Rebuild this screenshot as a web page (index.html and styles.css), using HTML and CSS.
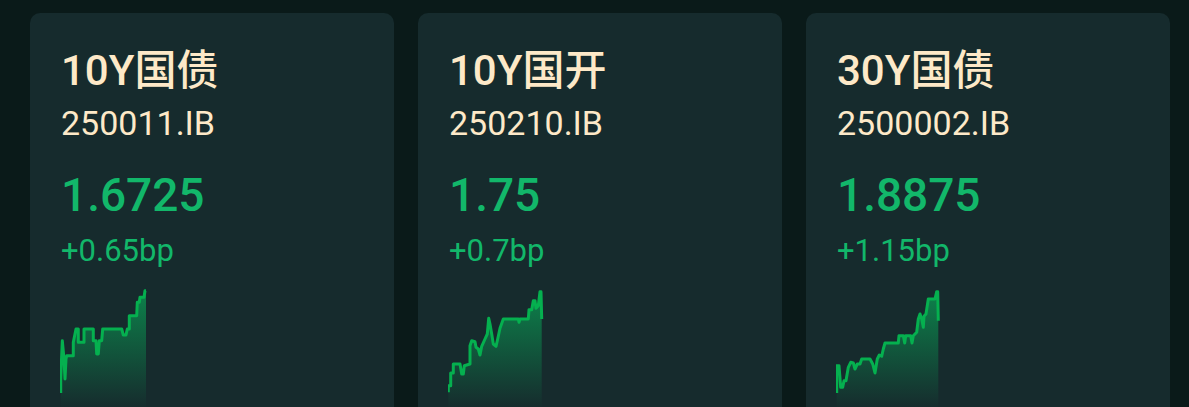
FILE: index.html
```html
<!DOCTYPE html>
<html>
<head>
    <title>Bond Yields</title>
    <link rel="stylesheet" href="styles.css">
</head>
<body>
    <svg class="defs" width="0" height="0">
        <defs>
            <linearGradient id="area" x1="0" y1="0" x2="0" y2="1">
                <stop offset="0" stop-color="#0b9150" stop-opacity="0.85"/>
                <stop offset="1" stop-color="#0b9150" stop-opacity="0"/>
            </linearGradient>
        </defs>
    </svg>
    <div class="board">
        <div class="card">
            <div class="name">10Y国债</div>
            <div class="code">250011.IB</div>
            <div class="price">1.6725</div>
            <div class="change">+0.65bp</div>
            <svg class="spark" width="90" height="120" viewBox="0 0 90 120">
                <path class="fill" d="M0.7,104 L0.7,90 L2.3,51.7 L4,70 L5,90 L6,70 L6.7,66.7 L13.3,66.7 L13.3,53.3 L16,40 L18.3,40 L18.3,53.3 L24,53.3 L24,40 L33.3,40 L33.3,51.7 L36,51.7 L36.7,65 L38.3,65 L39.3,51.7 L41.7,51.7 L42.7,40 L61.7,40 L63.3,46 L66,46 L67.3,40 L69.3,40 L69.3,26.7 L76.7,26.7 L77.3,13.3 L79.3,13.3 L80,8.3 L84,8.3 L85,1.7 L86,1.7 L86,120 L0.7,120 Z"/>
                <path class="line" d="M0.7,104 L0.7,90 L2.3,51.7 L4,70 L5,90 L6,70 L6.7,66.7 L13.3,66.7 L13.3,53.3 L16,40 L18.3,40 L18.3,53.3 L24,53.3 L24,40 L33.3,40 L33.3,51.7 L36,51.7 L36.7,65 L38.3,65 L39.3,51.7 L41.7,51.7 L42.7,40 L61.7,40 L63.3,46 L66,46 L67.3,40 L69.3,40 L69.3,26.7 L76.7,26.7 L77.3,13.3 L79.3,13.3 L80,8.3 L84,8.3 L85,1.7 L86,1.7"/>
            </svg>
        </div>
        <div class="card">
            <div class="name">10Y国开</div>
            <div class="code">250210.IB</div>
            <div class="price">1.75</div>
            <div class="change">+0.7bp</div>
            <svg class="spark" width="96" height="120" viewBox="0 0 96 120">
                <path class="fill" d="M0.3,103.3 L0.3,96.7 L2.7,96.7 L2.7,84 L5.3,84 L5.3,75 L12,75 L13.7,85 L15.3,85 L16.3,76.7 L22,75 L22,56.7 L23.7,51.7 L27,52.7 L28,58.3 L30.3,60 L32,66 L33.7,57.3 L37,50 L39.3,45 L40.7,29.3 L42,35 L43.7,45 L45.3,55 L48,57.3 L49.7,50 L52,39.3 L55.3,30 L70.3,30 L71,33.3 L72,30 L80.3,30 L81,20.7 L83.7,20.7 L85.3,11.7 L87,11.7 L88,19.3 L90.3,16.7 L92,2.7 L93,2.7 L93.7,30 L93.7,120 L0.3,120 Z"/>
                <path class="line" d="M0.3,103.3 L0.3,96.7 L2.7,96.7 L2.7,84 L5.3,84 L5.3,75 L12,75 L13.7,85 L15.3,85 L16.3,76.7 L22,75 L22,56.7 L23.7,51.7 L27,52.7 L28,58.3 L30.3,60 L32,66 L33.7,57.3 L37,50 L39.3,45 L40.7,29.3 L42,35 L43.7,45 L45.3,55 L48,57.3 L49.7,50 L52,39.3 L55.3,30 L70.3,30 L71,33.3 L72,30 L80.3,30 L81,20.7 L83.7,20.7 L85.3,11.7 L87,11.7 L88,19.3 L90.3,16.7 L92,2.7 L93,2.7 L93.7,30"/>
            </svg>
        </div>
        <div class="card">
            <div class="name">30Y国债</div>
            <div class="code">2500002.IB</div>
            <div class="price">1.8875</div>
            <div class="change">+1.15bp</div>
            <svg class="spark" width="104" height="120" viewBox="0 0 104 120">
                <path class="fill" d="M0.7,104 L0.7,76.7 L3,76.7 L4.7,98.3 L6.7,98.3 L8,91.7 L10,91.7 L12.3,78.3 L14.7,73.3 L17.3,74 L19,80 L21.3,75 L24,75 L25.7,70 L34,70 L36.7,75 L39,84 L41.3,70 L43.3,66 L45.7,67.3 L47.3,60 L49,54 L62.3,54 L63,46.7 L67.3,46.7 L68.7,54 L69.7,46.7 L74.7,46.7 L76,54 L77.3,46.7 L80.7,43.3 L82.3,30 L84,25 L85.7,30 L87.3,38.3 L88,27.3 L90,25 L92.3,10 L99,10 L100.7,2.7 L101.7,2.7 L102.3,31.7 L102.3,120 L0.7,120 Z"/>
                <path class="line" d="M0.7,104 L0.7,76.7 L3,76.7 L4.7,98.3 L6.7,98.3 L8,91.7 L10,91.7 L12.3,78.3 L14.7,73.3 L17.3,74 L19,80 L21.3,75 L24,75 L25.7,70 L34,70 L36.7,75 L39,84 L41.3,70 L43.3,66 L45.7,67.3 L47.3,60 L49,54 L62.3,54 L63,46.7 L67.3,46.7 L68.7,54 L69.7,46.7 L74.7,46.7 L76,54 L77.3,46.7 L80.7,43.3 L82.3,30 L84,25 L85.7,30 L87.3,38.3 L88,27.3 L90,25 L92.3,10 L99,10 L100.7,2.7 L101.7,2.7 L102.3,31.7"/>
            </svg>
        </div>
    </div>
</body>
</html>
```

FILE: styles.css
```css
body {
    font-family: Roboto, "Noto Sans CJK SC", sans-serif;
    background-color: #0a1a19;
    margin: 0;
    padding: 0;
    overflow: hidden;
}

.defs {
    position: absolute;
}

.board {
    display: flex;
    gap: 24px;
    padding: 13px 0 0 30px;
}

.card {
    width: 364px;
    height: 420px;
    box-sizing: border-box;
    padding: 34px 30px 0 30px;
    background-color: #162b2d;
    border-radius: 10px;
    display: flex;
    flex-direction: column;
    align-items: flex-start;
}

.name,
.code,
.price,
.change {
    padding-left: 1px;
}

.name {
    font-size: 42px;
    line-height: 48px;
    font-weight: 500;
    color: #fde9c8;
}

.code {
    margin-top: 8px;
    font-size: 34px;
    line-height: 40px;
    color: #fde9c8;
}

.price {
    margin-top: 25px;
    font-size: 46px;
    line-height: 54px;
    font-weight: 500;
    color: #12b76a;
}

.change {
    margin-top: 12px;
    font-size: 31px;
    line-height: 34px;
    color: #12b76a;
}

.spark {
    margin-top: 21px;
    display: block;
}

.spark .fill {
    fill: url(#area);
}

.spark .line {
    fill: none;
    stroke: #05b04f;
    stroke-width: 3;
    stroke-linejoin: round;
}
```
